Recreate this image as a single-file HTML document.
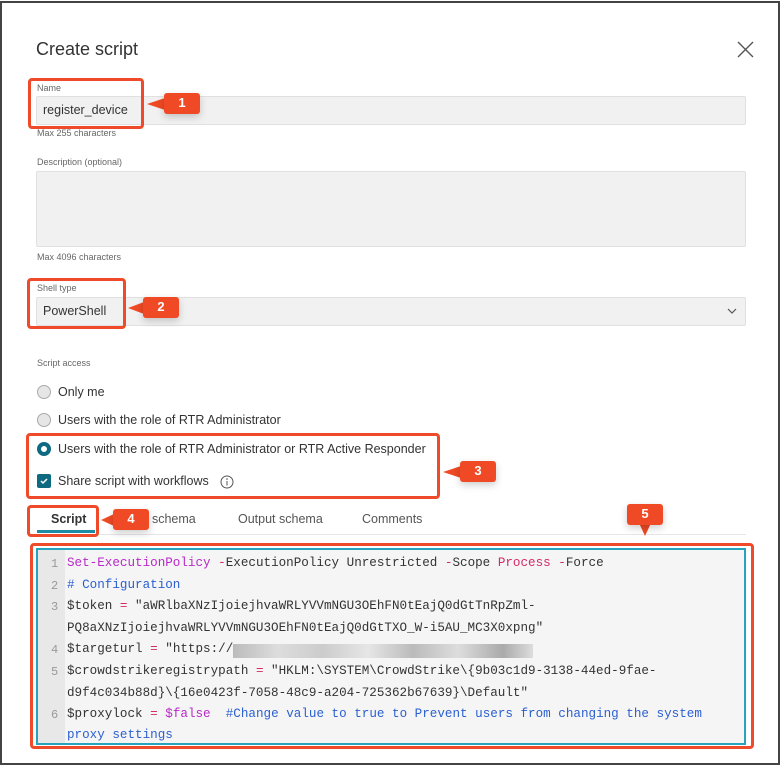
<!DOCTYPE html>
<html><head><meta charset="utf-8"><style>
*{box-sizing:border-box;margin:0;padding:0}
body{width:782px;height:768px;background:#fff;font-family:"Liberation Sans",sans-serif;color:#333;position:relative;overflow:hidden}
.frame{position:absolute;left:0;top:1px;width:780px;height:764px;border:2px solid #444}
.a{position:absolute}
.lbl{font-size:9px;color:#666}
.inp{background:#f1f1f1;border:1px solid #e0e0e0;border-radius:2px}
.red{position:absolute;border:3px solid #ef4a2a;border-radius:4px}
.call{position:absolute;background:#ef4a25;color:#fff;font-weight:bold;font-size:13px;text-align:center;line-height:20px;width:36px;height:21px;border-radius:3px;box-shadow:0 3px 8px rgba(0,0,0,.2)}
.radio{position:absolute;width:14px;height:14px;border-radius:50%;border:1px solid #aaa;background:#e6e6e6}
.opt{position:absolute;font-size:12.5px;color:#333}
.code{position:absolute;left:36px;top:548px;width:710px;height:197px;background:#f5f5f5;border:2px solid #28a3bd;overflow:hidden}
.gut{position:absolute;left:0;top:0;width:27px;height:100%;background:#e8e8e8}
.ln{position:absolute;font-family:"Liberation Mono",monospace;font-size:12.6px;white-space:pre;color:#333}
.n{position:absolute;font-family:"Liberation Mono",monospace;font-size:12px;color:#999}
.k{color:#b829c8}.p{color:#d42a6a}.c{color:#2a5fd0}
</style></head><body>
<div class="frame"></div>
<div class="a" style="left:36px;top:39px;font-size:18px;color:#333">Create script</div>
<svg class="a" style="left:737px;top:41px" width="17" height="17"><path d="M1 1L16 16M16 1L1 16" stroke="#555" stroke-width="1.4"/></svg>

<div class="a lbl" style="left:37px;top:83px">Name</div>
<div class="a inp" style="left:36px;top:96px;width:710px;height:29px"></div>
<div class="a" style="left:43px;top:103px;font-size:12.5px">register_device</div>
<div class="a lbl" style="left:37px;top:128px">Max 255 characters</div>

<div class="a lbl" style="left:37px;top:157px">Description (optional)</div>
<div class="a inp" style="left:36px;top:171px;width:710px;height:76px"></div>
<div class="a lbl" style="left:37px;top:252px">Max 4096 characters</div>

<div class="a lbl" style="left:37px;top:283px">Shell type</div>
<div class="a inp" style="left:36px;top:297px;width:710px;height:29px"></div>
<div class="a" style="left:43px;top:304px;font-size:12.5px">PowerShell</div>
<svg class="a" style="left:727px;top:308px" width="10" height="7"><path d="M1 1L5 5L9 1" stroke="#555" fill="none" stroke-width="1.2"/></svg>

<div class="a lbl" style="left:37px;top:358px">Script access</div>
<div class="radio" style="left:37px;top:385px"></div><div class="opt" style="left:58px;top:385px">Only me</div>
<div class="radio" style="left:37px;top:413px"></div><div class="opt" style="left:58px;top:413px">Users with the role of RTR Administrator</div>
<div class="radio" style="left:37px;top:442px;background:#fff;border:4px solid #0e6a80"></div><div class="opt" style="left:58px;top:442px">Users with the role of RTR Administrator or RTR Active Responder</div>
<div class="a" style="left:37px;top:474px;width:14px;height:14px;background:#0e6a80;border-radius:2px"><svg width="14" height="14"><path d="M4 7L6 9L10 5" stroke="#fff" stroke-width="1.5" fill="none"/></svg></div>
<div class="opt" style="left:58px;top:474px">Share script with workflows</div>
<svg class="a" style="left:220px;top:475px" width="14" height="14"><circle cx="7" cy="7" r="6" fill="none" stroke="#555"/><path d="M7 6V10.5" stroke="#555"/><circle cx="7" cy="4" r=".8" fill="#555"/></svg>

<div class="opt" style="left:51px;top:512px;font-weight:bold">Script</div>
<div class="a" style="left:37px;top:530px;width:58px;height:3px;background:#1e8aa4"></div>
<div class="opt" style="left:145px;top:512px;color:#555">t schema</div>
<div class="opt" style="left:238px;top:512px;color:#555">Output schema</div>
<div class="opt" style="left:362px;top:512px;color:#555">Comments</div>
<div class="a" style="left:36px;top:534px;width:710px;height:1px;background:#e6e6e6"></div>

<div class="code"><div class="gut"></div>
<div class="n" style="left:13px;top:7px">1</div><div class="ln" style="left:29px;top:6px"><span class="k">Set-ExecutionPolicy</span> <span class="p">-</span>ExecutionPolicy Unrestricted <span class="p">-</span>Scope <span class="p">Process</span> <span class="p">-</span>Force</div>
<div class="n" style="left:13px;top:29px">2</div><div class="ln c" style="left:29px;top:28px"># Configuration</div>
<div class="n" style="left:13px;top:50px">3</div><div class="ln" style="left:29px;top:49px">$token <span class="p">=</span> "aWRlbaXNzIjoiejhvaWRLYVVmNGU3OEhFN0tEajQ0dGtTnRpZml-</div>
<div class="ln" style="left:29px;top:71px">PQ8aXNzIjoiejhvaWRLYVVmNGU3OEhFN0tEajQ0dGtTXO_W-i5AU_MC3X0xpng"</div>
<div class="n" style="left:13px;top:93px">4</div><div class="ln" style="left:29px;top:92px">$targeturl <span class="p">=</span> "https://</div>
<div class="a" style="left:195px;top:94px;width:300px;height:14px;background:linear-gradient(90deg,#bbb,#ddd 15%,#ccc 30%,#e6e6e6 45%,#bbb 60%,#ddd 75%,#aaa 90%,#ddd)"></div>
<div class="n" style="left:13px;top:115px">5</div><div class="ln" style="left:29px;top:114px">$crowdstrikeregistrypath <span class="p">=</span> "HKLM:\SYSTEM\CrowdStrike\{9b03c1d9-3138-44ed-9fae-</div>
<div class="ln" style="left:29px;top:136px">d9f4c034b88d}\{16e0423f-7058-48c9-a204-725362b67639}\Default"</div>
<div class="n" style="left:13px;top:158px">6</div><div class="ln" style="left:29px;top:157px">$proxylock <span class="p">=</span> <span class="k">$false</span>  <span class="c">#Change value to true to Prevent users from changing the system</span></div>
<div class="ln c" style="left:29px;top:178px">proxy settings</div>
</div>

<div class="red" style="left:28px;top:78px;width:116px;height:51px"></div>
<div class="red" style="left:27px;top:278px;width:99px;height:51px"></div>
<div class="red" style="left:26px;top:433px;width:414px;height:66px"></div>
<div class="red" style="left:27px;top:505px;width:72px;height:32px"></div>
<div class="red" style="left:30px;top:543px;width:724px;height:206px"></div>

<svg class="a" style="left:145px;top:96px" width="22" height="16"><path d="M20 2L2 8L20 14Z" fill="#ef4a25"/></svg>
<div class="call" style="left:164px;top:93px">1</div>
<svg class="a" style="left:126px;top:300px" width="20" height="16"><path d="M18 2L2 8L18 14Z" fill="#ef4a25"/></svg>
<div class="call" style="left:143px;top:297px">2</div>
<svg class="a" style="left:441px;top:464px" width="22" height="16"><path d="M20 2L2 8L20 14Z" fill="#ef4a25"/></svg>
<div class="call" style="left:460px;top:461px">3</div>
<svg class="a" style="left:99px;top:512px" width="17" height="16"><path d="M15 2L2 8L15 14Z" fill="#ef4a25"/></svg>
<div class="call" style="left:113px;top:509px">4</div>
<svg class="a" style="left:637px;top:522px" width="16" height="16"><path d="M2 1L8 14L14 1Z" fill="#ef4a25"/></svg>
<div class="call" style="left:627px;top:504px">5</div>
</body></html>
